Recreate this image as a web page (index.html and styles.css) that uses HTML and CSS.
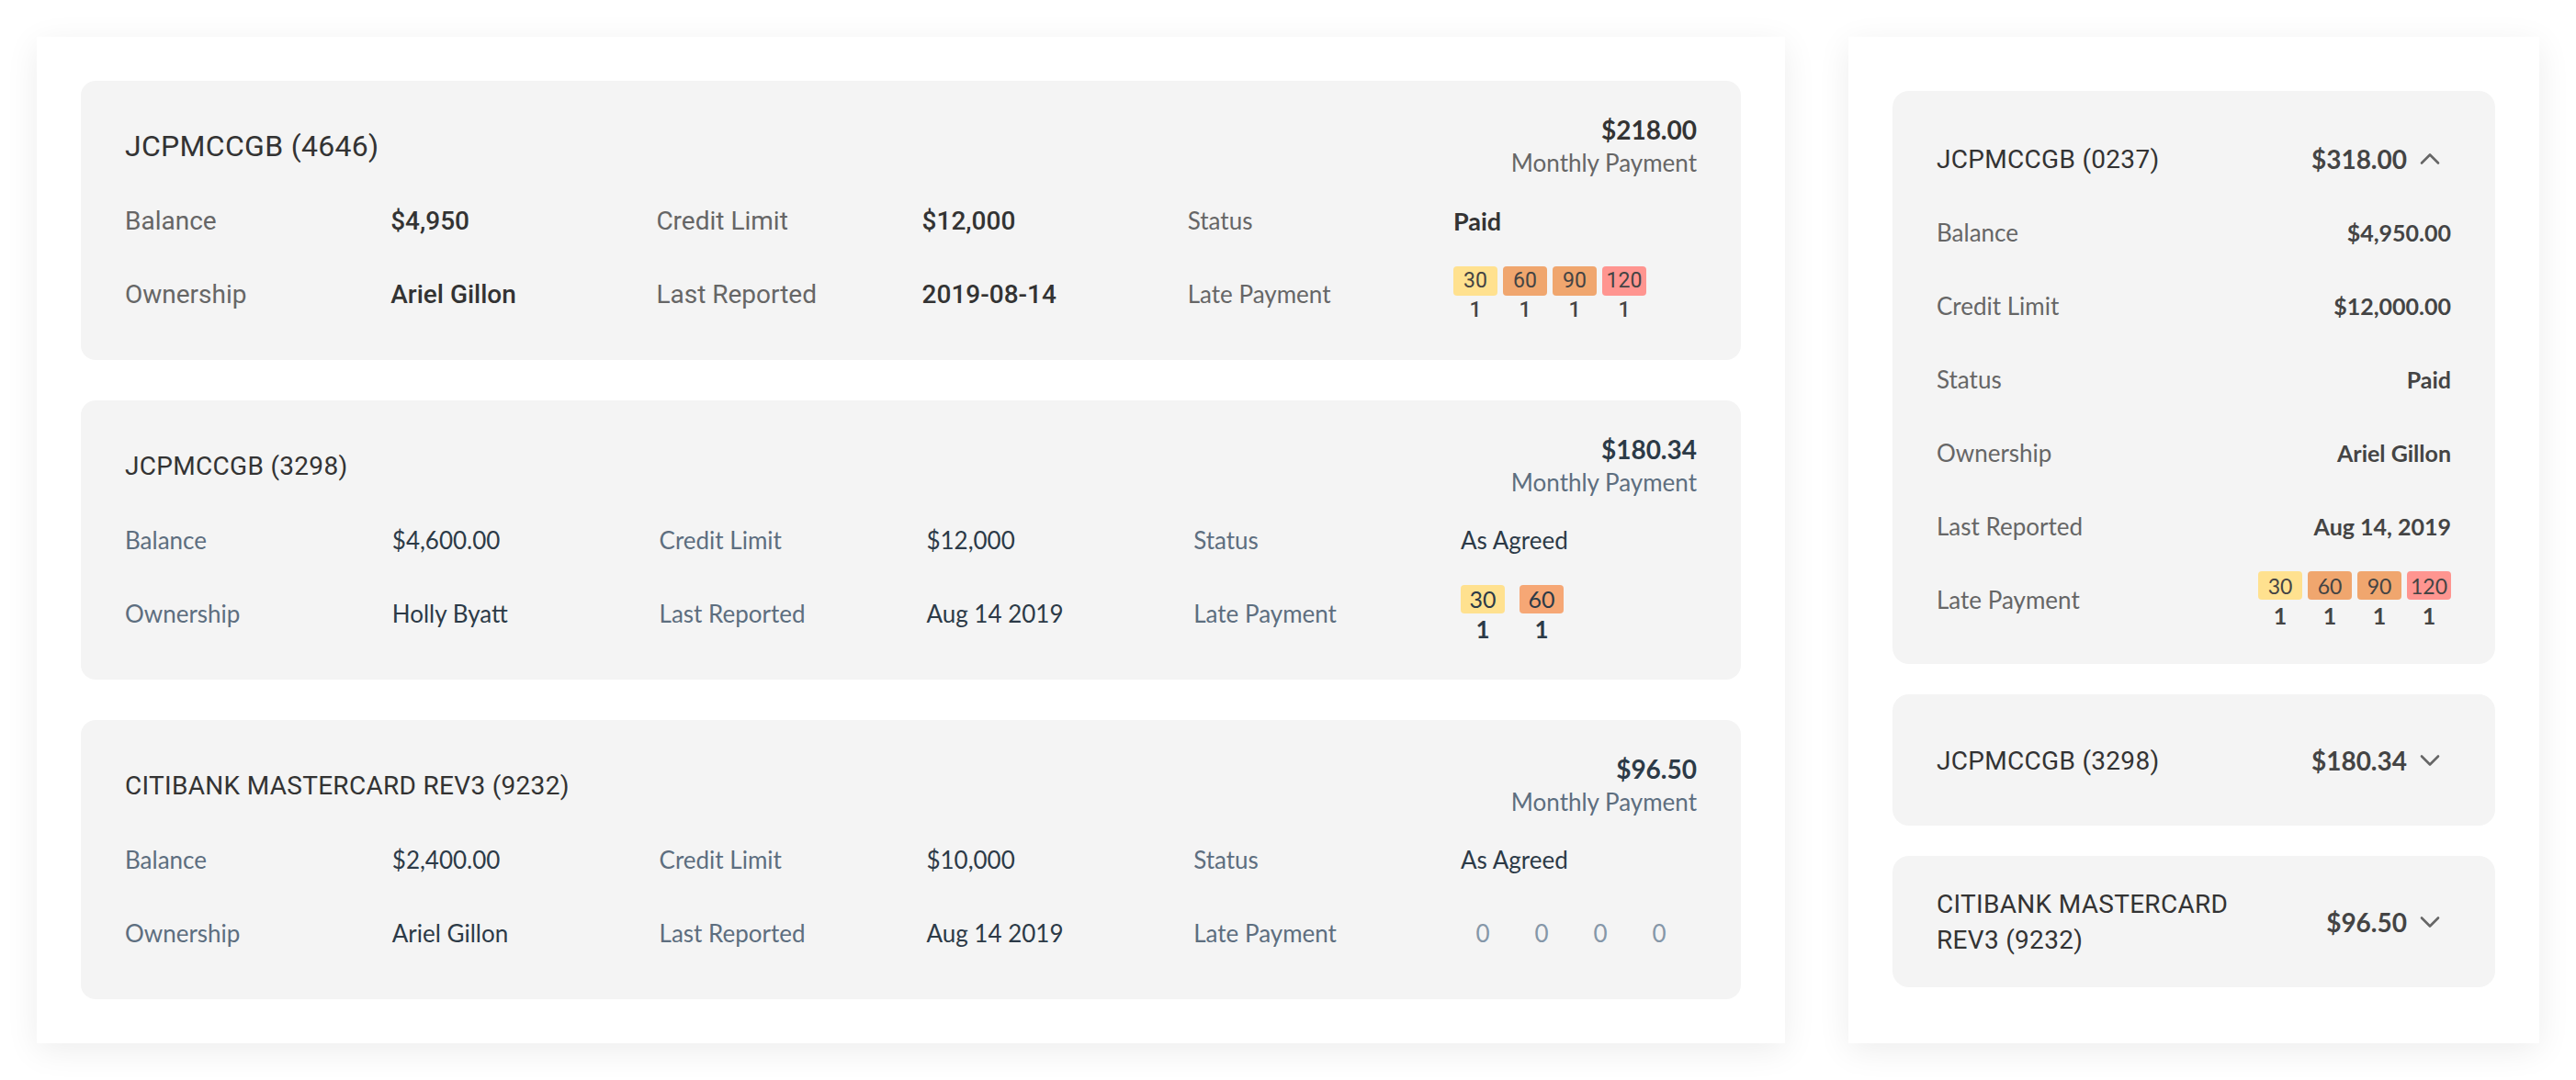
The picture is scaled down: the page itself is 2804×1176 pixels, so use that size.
FILE: index.html
```html
<!DOCTYPE html>
<html lang="en">
<head>
<meta charset="utf-8">
<title>Accounts</title>
<link rel="stylesheet" href="styles.css">
</head>
<body>
<div class="page">
  <section class="panel panel-wide">
    <article class="acct">
      <header class="acct-head">
        <h2 class="acct-name acct-name-lg">JCPMCCGB (4646)</h2>
        <div class="acct-pay">
          <div class="pay-amount">$218.00</div>
          <div class="pay-label">Monthly Payment</div>
        </div>
      </header>
      <div class="acct-grid grid-a">
        <span class="lbl-r">Balance</span><span class="val-r">$4,950</span>
        <span class="lbl-r">Credit Limit</span><span class="val-r">$12,000</span>
        <span class="lbl-g">Status</span><span class="val-g">Paid</span>
        <span class="lbl-r">Ownership</span><span class="val-r">Ariel Gillon</span>
        <span class="lbl-r">Last Reported</span><span class="val-r">2019-08-14</span>
        <span class="lbl-g">Late Payment</span>
        <div class="late late-tight late-r">
          <div class="late-col"><span class="badge b30">30</span><span class="cnt">1</span></div>
          <div class="late-col"><span class="badge b60">60</span><span class="cnt">1</span></div>
          <div class="late-col"><span class="badge b90">90</span><span class="cnt">1</span></div>
          <div class="late-col"><span class="badge b120">120</span><span class="cnt">1</span></div>
        </div>
      </div>
    </article>

    <article class="acct acct-slate">
      <header class="acct-head">
        <h2 class="acct-name">JCPMCCGB (3298)</h2>
        <div class="acct-pay">
          <div class="pay-amount">$180.34</div>
          <div class="pay-label">Monthly Payment</div>
        </div>
      </header>
      <div class="acct-grid grid-b">
        <span class="lbl-s">Balance</span><span class="val-s">$4,600.00</span>
        <span class="lbl-s">Credit Limit</span><span class="val-s">$12,000</span>
        <span class="lbl-s">Status</span><span class="val-s">As Agreed</span>
        <span class="lbl-s">Ownership</span><span class="val-s">Holly Byatt</span>
        <span class="lbl-s">Last Reported</span><span class="val-s">Aug 14 2019</span>
        <span class="lbl-s">Late Payment</span>
        <div class="late late-wide late-s">
          <div class="late-col"><span class="badge b30">30</span><span class="cnt">1</span></div>
          <div class="late-col"><span class="badge b60s">60</span><span class="cnt">1</span></div>
        </div>
      </div>
    </article>

    <article class="acct acct-slate">
      <header class="acct-head">
        <h2 class="acct-name">CITIBANK MASTERCARD REV3 (9232)</h2>
        <div class="acct-pay">
          <div class="pay-amount">$96.50</div>
          <div class="pay-label">Monthly Payment</div>
        </div>
      </header>
      <div class="acct-grid grid-b">
        <span class="lbl-s">Balance</span><span class="val-s">$2,400.00</span>
        <span class="lbl-s">Credit Limit</span><span class="val-s">$10,000</span>
        <span class="lbl-s">Status</span><span class="val-s">As Agreed</span>
        <span class="lbl-s">Ownership</span><span class="val-s">Ariel Gillon</span>
        <span class="lbl-s">Last Reported</span><span class="val-s">Aug 14 2019</span>
        <span class="lbl-s">Late Payment</span>
        <div class="late late-wide late-zero">
          <span class="zero">0</span><span class="zero">0</span><span class="zero">0</span><span class="zero">0</span>
        </div>
      </div>
    </article>
  </section>

  <aside class="panel panel-side">
    <article class="side-card side-card-open">
      <header class="side-head">
        <h2 class="side-name">JCPMCCGB (0237)</h2>
        <div class="side-pay">
          <span class="side-amount">$318.00</span>
          <svg class="chev" viewBox="0 0 24 24" width="24" height="24" aria-hidden="true"><path d="M3 16.5 L12 7.5 L21 16.5"/></svg>
        </div>
      </header>
      <div class="side-rows">
        <span class="side-lbl">Balance</span><span class="side-val">$4,950.00</span>
        <span class="side-lbl">Credit Limit</span><span class="side-val">$12,000.00</span>
        <span class="side-lbl">Status</span><span class="side-val">Paid</span>
        <span class="side-lbl">Ownership</span><span class="side-val">Ariel Gillon</span>
        <span class="side-lbl">Last Reported</span><span class="side-val">Aug 14, 2019</span>
        <span class="side-lbl">Late Payment</span>
        <div class="late late-tight late-side">
          <div class="late-col"><span class="badge b30">30</span><span class="cnt">1</span></div>
          <div class="late-col"><span class="badge b60">60</span><span class="cnt">1</span></div>
          <div class="late-col"><span class="badge b90">90</span><span class="cnt">1</span></div>
          <div class="late-col"><span class="badge b120">120</span><span class="cnt">1</span></div>
        </div>
      </div>
    </article>

    <article class="side-card">
      <header class="side-head">
        <h2 class="side-name">JCPMCCGB (3298)</h2>
        <div class="side-pay">
          <span class="side-amount">$180.34</span>
          <svg class="chev" viewBox="0 0 24 24" width="24" height="24" aria-hidden="true"><path d="M3 7.5 L12 16.5 L21 7.5"/></svg>
        </div>
      </header>
    </article>

    <article class="side-card">
      <header class="side-head">
        <h2 class="side-name">CITIBANK MASTERCARD REV3 (9232)</h2>
        <div class="side-pay">
          <span class="side-amount">$96.50</span>
          <svg class="chev" viewBox="0 0 24 24" width="24" height="24" aria-hidden="true"><path d="M3 7.5 L12 16.5 L21 7.5"/></svg>
        </div>
      </header>
    </article>
  </aside>
</div>
</body>
</html>
```
FILE: styles.css
```css
* {
  box-sizing: border-box;
  margin: 0;
  padding: 0;
}

html, body {
  background: #ffffff;
}

body {
  font-family: "Lato", "Noto Sans", sans-serif;
  color: #333333;
}

.page {
  display: flex;
  align-items: stretch;
  gap: 69px;
  padding: 40px;
  height: 1176px;
}

.panel {
  background: #ffffff;
  box-shadow: 0 8px 34px rgba(0, 0, 0, 0.075);
}

.panel-wide {
  width: 1903px;
  flex: none;
  padding: 48px;
  display: flex;
  flex-direction: column;
  gap: 44px;
}

.panel-side {
  width: 752px;
  flex: none;
  padding: 59px 48px;
  display: flex;
  flex-direction: column;
  gap: 33px;
}

/* ---------- wide account cards ---------- */

.acct {
  background: #f4f4f4;
  border-radius: 16px;
  height: 304px;
  padding: 35px 48px 0;
}

.acct-head {
  display: flex;
  justify-content: space-between;
  align-items: center;
  height: 72px;
}

.acct-name {
  font-family: Roboto, "Liberation Sans", sans-serif;
  font-weight: 400;
  font-size: 28px;
  letter-spacing: 0.3px;
  color: #333333;
}

.acct-name-lg {
  font-size: 32px;
  letter-spacing: 0.3px;
}

.acct-pay {
  text-align: right;
}

.pay-amount {
  font-size: 28px;
  font-weight: 700;
  line-height: 36px;
  color: #333333;
}

.pay-label {
  font-size: 26px;
  line-height: 36px;
  color: #666666;
}

.acct-slate .pay-amount {
  color: #2c3a47;
}

.acct-slate .pay-label {
  color: #5d6e7f;
}

.acct-grid {
  display: grid;
  grid-auto-rows: 80px;
  align-items: center;
  margin-top: 5px;
}

.grid-a {
  grid-template-columns: repeat(5, 289.2px) 1fr;
}

.grid-b {
  grid-template-columns: repeat(5, 290.8px) 1fr;
}

.lbl-r {
  font-family: Roboto, "Liberation Sans", sans-serif;
  font-size: 28px;
  color: #666666;
}

.val-r {
  font-family: Roboto, "Liberation Sans", sans-serif;
  font-size: 28px;
  font-weight: 500;
  color: #333333;
}

.lbl-g {
  font-size: 26px;
  color: #666666;
}

.val-g {
  font-size: 27px;
  font-weight: 700;
  color: #333333;
}

.lbl-s {
  font-size: 26px;
  color: #5d6e7f;
}

.val-s {
  font-size: 26px;
  color: #2c3a47;
}

/* ---------- late payment badges ---------- */

.late {
  display: flex;
}

.late-tight {
  gap: 6px;
}

.late-wide {
  gap: 16px;
}

.late-col {
  width: 48px;
  display: flex;
  flex-direction: column;
  align-items: center;
}

.badge {
  width: 100%;
  height: 32px;
  border-radius: 4px;
  display: flex;
  align-items: center;
  justify-content: center;
  color: #444444;
}

.b30 { background: #ffe18f; }
.b60 { background: #f0a66e; }
.b90 { background: #f0a66e; }
.b120 { background: #ff9590; }
.b60s { background: #f6a775; }

.cnt {
  color: #444444;
}

.late-r .badge {
  font-family: Roboto, "Liberation Sans", sans-serif;
  font-size: 23px;
}

.late-r .cnt {
  font-family: Roboto, "Liberation Sans", sans-serif;
  font-size: 23px;
  font-weight: 500;
  line-height: 26px;
  margin-top: 3px;
}

.late-s .badge {
  height: 31px;
  font-size: 25px;
  color: #2c3a47;
}

.late-s .cnt {
  font-size: 26px;
  font-weight: 700;
  line-height: 30px;
  margin-top: 2px;
  color: #2c3a47;
}

.late-zero .zero {
  width: 48px;
  text-align: center;
  font-size: 26px;
  color: #8597a8;
}

.late-side {
  justify-self: end;
}

.late-side .badge {
  height: 31px;
  font-size: 23px;
}

.late-side .cnt {
  font-size: 25px;
  font-weight: 700;
  line-height: 27px;
  margin-top: 4px;
}

/* ---------- side cards ---------- */

.side-card {
  background: #f4f4f4;
  border-radius: 18px;
  padding: 32px 48px 31px;
}

.side-card-open {
  padding: 34px 48px 30px;
}

.side-head {
  display: flex;
  justify-content: space-between;
  align-items: center;
  min-height: 80px;
}

.side-name {
  font-family: Roboto, "Liberation Sans", sans-serif;
  font-weight: 400;
  font-size: 28px;
  letter-spacing: 0.3px;
  line-height: 39px;
  color: #333333;
  max-width: 62%;
}

.side-pay {
  display: flex;
  align-items: center;
  gap: 13px;
}

.side-amount {
  font-size: 28px;
  font-weight: 700;
  color: #444444;
}

.chev {
  width: 24px;
  height: 24px;
  margin-right: 11px;
  fill: none;
  stroke: #666666;
  stroke-width: 2.6;
  stroke-linecap: round;
  stroke-linejoin: round;
}

.side-rows {
  display: grid;
  grid-template-columns: 1fr auto;
  grid-auto-rows: 80px;
  align-items: center;
}

.side-lbl {
  font-size: 26px;
  color: #666666;
}

.side-val {
  font-size: 25px;
  font-weight: 700;
  color: #444444;
  text-align: right;
}
```
